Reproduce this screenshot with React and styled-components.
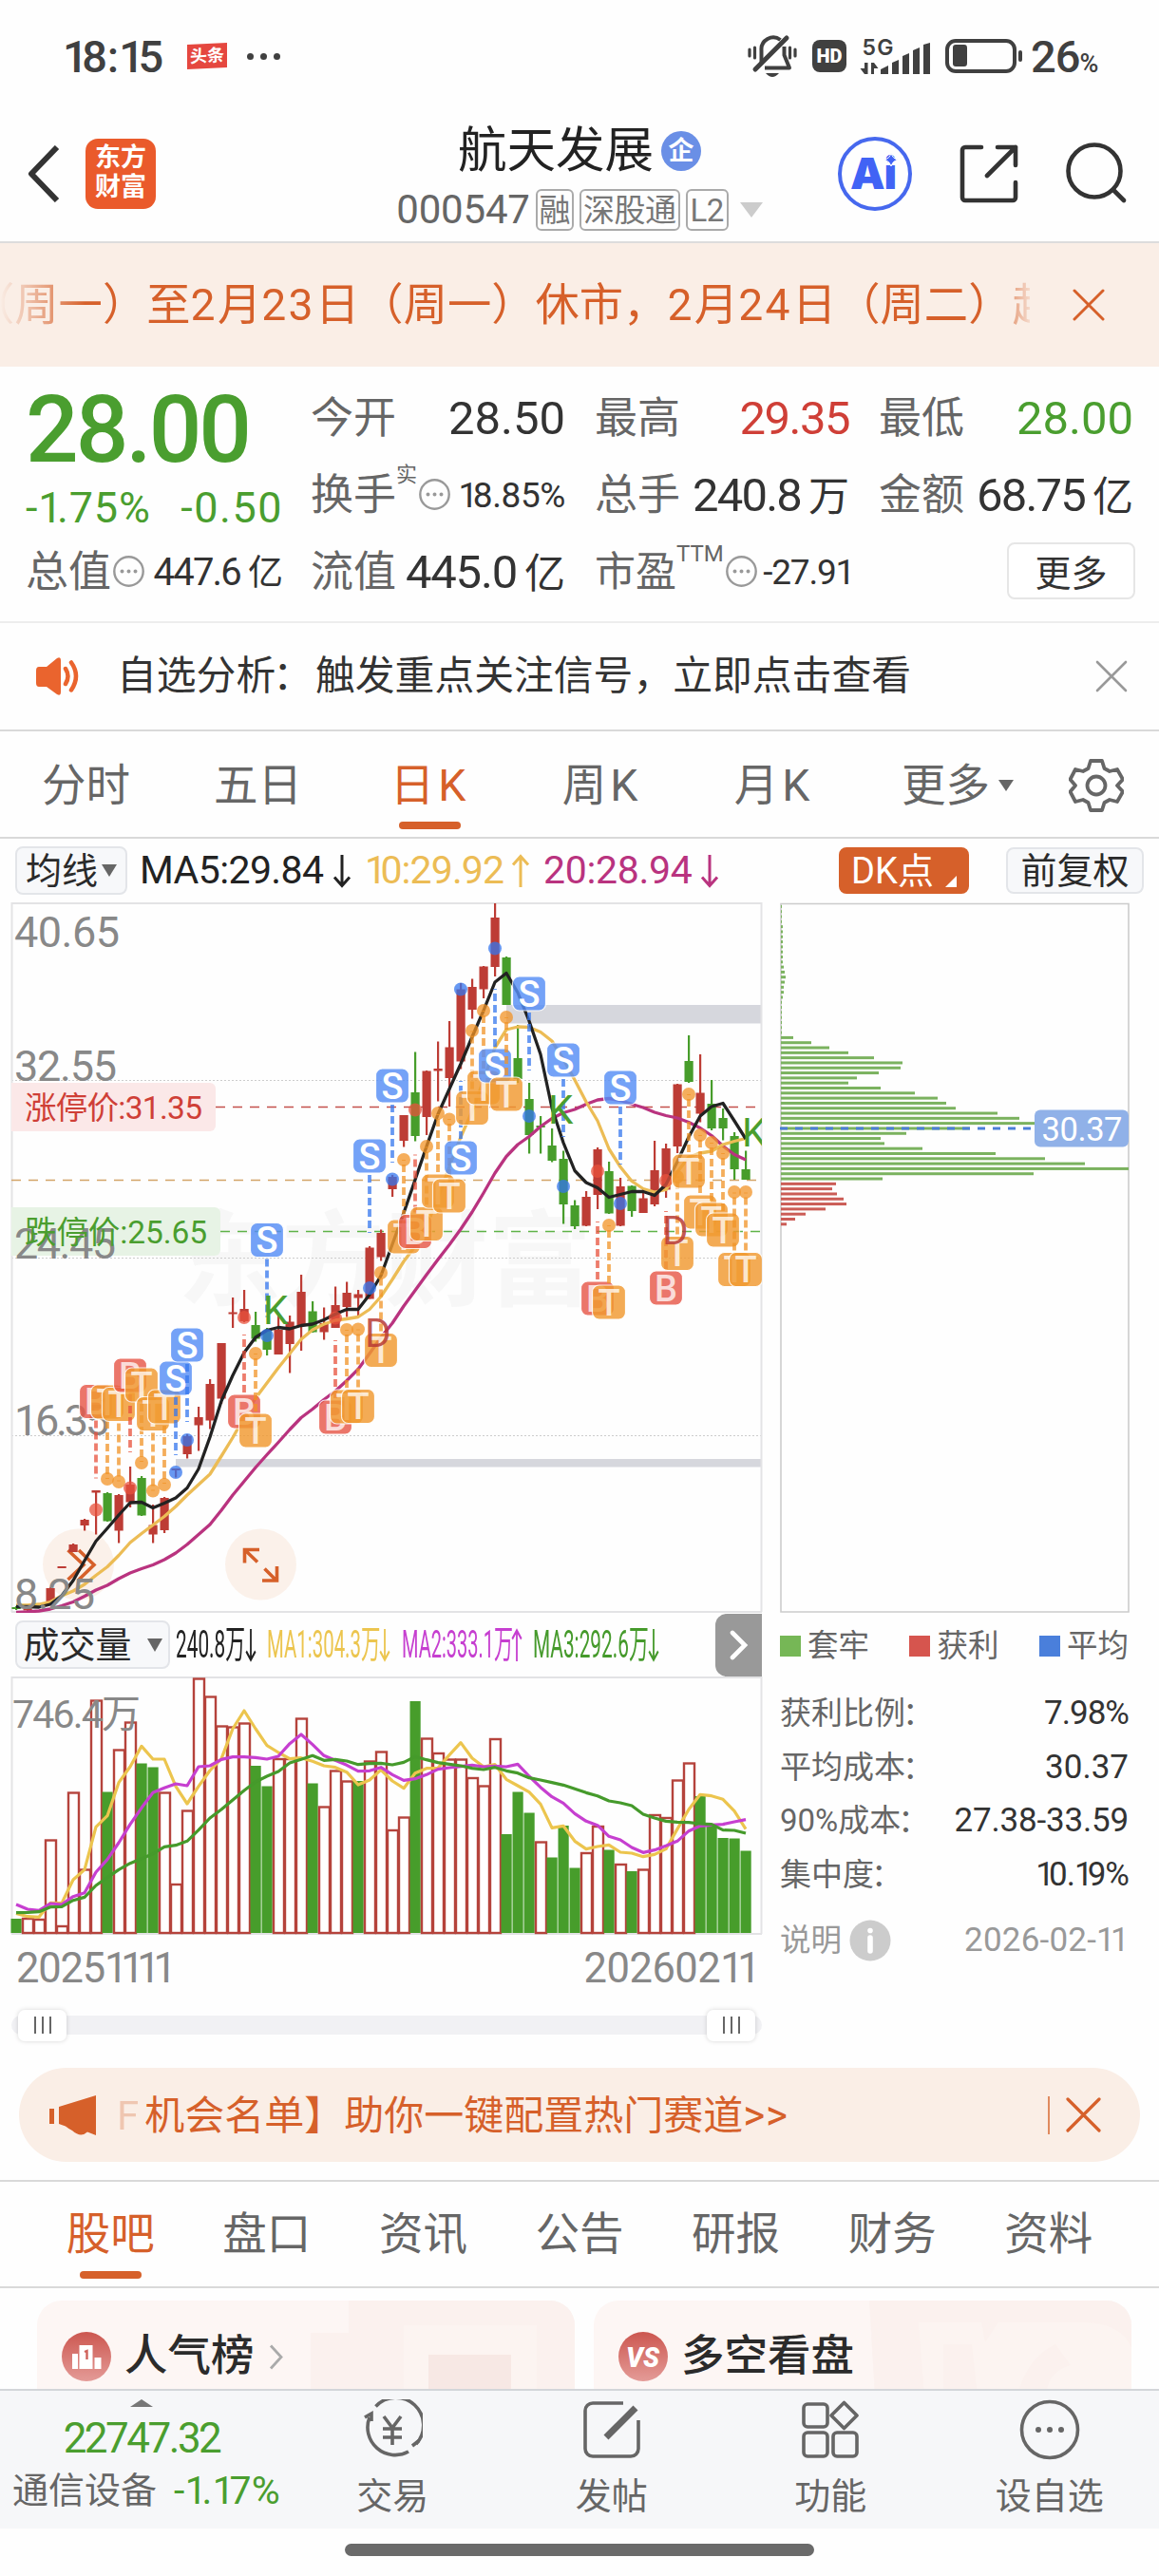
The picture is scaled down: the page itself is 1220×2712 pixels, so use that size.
import React from 'react';
import styled, { createGlobalStyle } from 'styled-components';

const GlobalStyle = createGlobalStyle`
  * {
    box-sizing: border-box;
  }
  body {
    margin: 0;
    background: #fefefe;
    color: #333;
    font-family: Roboto, "Noto Sans CJK SC", sans-serif;
    line-height: 1;
  }
  svg {
    display: block;
    flex: none;
  }
`;

const ORANGE = '#d6602a';
const GREEN = '#4a9e2f';
const RED = '#cf3f37';

const Page = styled.div`
  width: 1220px;
  height: 2712px;
  overflow: hidden;
  display: flex;
  flex-direction: column;
  white-space: nowrap;
`;

const Txt = styled.span`
  font-size: ${props => props.$size}px;
  letter-spacing: ${props => props.$ls || 0}px;
  color: ${props => props.$color || 'inherit'};
  font-weight: ${props => props.$weight || 400};
`;

// the digit 1 is set tighter than the other figures
const One = styled.span`
  margin-right: -0.14em;
`;

function Num({ children }) {
  return (
    <span>
      {children.split('').map((ch, i) => (ch === '1' ? <One key={i}>1</One> : ch))}
    </span>
  );
}

/* ---------- status bar ---------- */

const StatusBar = styled.div`
  height: 118px;
  padding: 0 60px 0 66px;
  display: flex;
  align-items: center;
  color: #404040;
`;

const NewsChip = styled.div`
  width: 42px;
  height: 26px;
  margin-left: 25px;
  background: #e5473f;
  color: #fff;
  font-size: 18px;
  font-weight: 700;
  display: flex;
  align-items: center;
  justify-content: center;
  transform: skewY(-3deg);
`;

const StatusDots = styled.div`
  display: flex;
  gap: 7px;
  margin: 0 auto 0 21px;

  i {
    width: 7px;
    height: 7px;
    border-radius: 50%;
    background: #404040;
  }
`;

const HdChip = styled.div`
  width: 36px;
  height: 34px;
  margin: 0 14px 0 15px;
  border-radius: 8px;
  background: #404040;
  color: #fff;
  font-size: 20px;
  font-weight: 900;
  display: flex;
  align-items: center;
  justify-content: center;
`;

const Percent = styled.div`
  width: 75px;
  margin-left: 7px;
  display: flex;
  align-items: baseline;
`;

const SignalBars = styled.svg`
  margin-right: 13px;
`;

function StatusIcons() {
  return (
    <>
      <svg width="54" height="48" viewBox="787 36 54 48" fill="none" stroke="#404040" strokeWidth="4">
        <path d="M802.500 67V54a12.500 12.500 0 0 1 20-11" />
        <path d="M796 74L829 41" strokeLinecap="round" strokeWidth="5" />
        <path d="M826.500 50v9l5.500 13.500H806" strokeLinejoin="round" />
        <path d="M807 78q7 8 14 0z" fill="#404040" stroke="none" />
        <path d="M790 53v7M795.500 51v11M832.500 51v11M838 53v7" strokeLinecap="round" strokeWidth="3.200" />
      </svg>
      <HdChip>HD</HdChip>
      <SignalBars width="76" height="42" viewBox="906 36 76 42" fill="#404040">
        <text x="908.500" y="56" fontSize="23" fontWeight="600" textLength="33" fontFamily="Inter">5G</text>
        <path d="M911 64h3.500v12H911l-4.500-6h4.500zM918 76V64h3l4.500 6H921v6z" />
        <path d="M928 76v-5l8-4v9zM940 76V64l7-3v15zM951 76V57l7-3v22zM962 76V51l7-3v28zM973 76V45l7-2v33z" />
      </SignalBars>
      <svg width="84" height="38" viewBox="995 40 84 38" fill="none" stroke="#404040" strokeWidth="4">
        <rect x="998" y="43" width="71" height="32" rx="9" />
        <rect x="1004" y="47" width="15" height="23" rx="3" fill="#404040" stroke="none" />
        <path d="M1075 55v8" strokeLinecap="round" />
      </svg>
    </>
  );
}

/* ---------- header ---------- */

const Header = styled.header`
  height: 138px;
  border-bottom: 2px solid #dcdcdc;
  display: grid;
  grid-template-columns: 1fr auto 1fr;
  align-items: center;
`;

const HeaderSide = styled.div`
  display: flex;
  align-items: center;
  gap: ${props => props.$gap}px;
  justify-content: ${props => (props.$end ? 'flex-end' : 'flex-start')};
  padding: 0 33px 7px 29px;
`;

const AppIcon = styled.div`
  width: 74px;
  height: 74px;
  border-radius: 13px;
  background: #ea5a2b;
  color: #fff;
  font-size: 27px;
  font-weight: 600;
  line-height: 31px;
  text-align: center;
  padding-top: 5px;
  white-space: normal;
`;

const TitleBlock = styled.div`
  padding-top: 8px;
  display: flex;
  flex-direction: column;
  align-items: center;
`;

const TitleRow = styled.div`
  height: 62px;
  display: flex;
  align-items: center;
  gap: ${props => props.$gap}px;
`;

const CorpBadge = styled.div`
  width: 42px;
  height: 42px;
  border-radius: 50%;
  background: #6a8fe6;
  color: #fff;
  font-size: 27px;
  font-weight: 700;
  display: flex;
  align-items: center;
  justify-content: center;
`;

const Tag = styled.span`
  height: 44px;
  width: ${props => props.$w}px;
  border: 2px solid #aaa;
  border-radius: 6px;
  color: #777;
  font-size: 33px;
  letter-spacing: -0.5px;
  display: flex;
  align-items: center;
  justify-content: center;
`;

const Caret = styled.i`
  width: 0;
  height: 0;
  border: ${props => props.$w / 2}px solid transparent;
  border-bottom-width: 0;
  border-top: ${props => props.$h}px solid ${props => props.$color || '#666'};
  margin-left: ${props => props.$ml || 0}px;
`;

/* ---------- banner ---------- */

const Banner = styled.div`
  height: 130px;
  background: #faeee6;
  color: ${ORANGE};
  display: flex;
  align-items: center;
  justify-content: space-between;
  padding-right: 57px;
`;

const Marquee = styled.div`
  width: 1084px;
  overflow: hidden;
  font-size: 46.300px;
  line-height: 60px;
  text-indent: -31px;
  mask-image: linear-gradient(90deg, transparent 0, #000 90px, #000 1045px, transparent 1090px);

  span {
    letter-spacing: 2.400px;
  }
`;

function Cross({ size, width, color }) {
  return (
    <svg width={size} height={size} viewBox={`0 0 ${size} ${size}`} stroke={color} strokeWidth={width} strokeLinecap="round">
      <path d={`M2 2L${size - 2} ${size - 2}M${size - 2} 2L2 ${size - 2}`} />
    </svg>
  );
}

/* ---------- quote ---------- */

const Quote = styled.section`
  height: 270px;
  padding: 14px 26px 0 27px;
  border-bottom: 2px solid #ededed;
  display: flex;
  gap: 29px;
`;

const PriceCol = styled.div`
  width: 271px;
  color: ${GREEN};
`;

const Price = styled.div`
  height: 106px;
  font-size: 98px;
  line-height: 106px;
  font-weight: 500;
  letter-spacing: -3px;
`;

const Change = styled.div`
  height: 56px;
  display: flex;
  align-items: center;
  justify-content: space-between;
`;

const Stats = styled.div`
  flex: 1;
  display: grid;
  grid-template-columns: repeat(3, 268px);
  grid-auto-rows: 81px;
  column-gap: 31px;
`;

const Cell = styled.div`
  height: 81px;
  display: flex;
  align-items: center;
  color: #333;
  font-size: ${props => props.$size || 49}px;
  letter-spacing: ${props => props.$ls || 0}px;

  b {
    font-weight: 400;
    margin-left: auto;
    color: ${props => props.$color || '#333'};
  }
  em {
    font-style: normal;
    font-size: ${props => props.$unit || 43}px;
    margin-left: 8px;
    letter-spacing: 0;
  }
`;

const Label = styled.span`
  font-size: ${props => props.$size || 45}px;
  letter-spacing: 0;
  color: #666;
`;

const Sup = styled.span`
  align-self: flex-start;
  margin-top: ${props => props.$top}px;
  font-size: ${props => props.$size}px;
  letter-spacing: 0;
  color: #666;
`;

function InfoDots() {
  return (
    <svg width="36" height="36" viewBox="0 0 36 36" fill="none" stroke="#999" strokeWidth="2.400">
      <circle cx="18.500" cy="16.500" r="15.200" />
      <path d="M11.500 16.500h.01M18.500 16.500h.01M25.500 16.500h.01" strokeWidth="4" strokeLinecap="round" />
    </svg>
  );
}

const MoreButton = styled.button`
  width: 135px;
  height: 60px;
  margin: 9px -2px auto auto;
  border: 2px solid #e6e6e6;
  border-radius: 8px;
  background: #fff;
  color: #333;
  font: 38px/1 "Noto Sans CJK SC", sans-serif;
  padding: 0;
`;

const Notice = styled.div`
  height: 114px;
  border-bottom: 2px solid #d9d9d9;
  padding: 0 33px 0 38px;
  display: flex;
  align-items: center;
  font-size: 41.800px;

  > span {
    margin: 0 auto 0 37px;
  }
`;

const Colon = styled.span`
  margin: 0 3px 0 -3px;
`;

/* ---------- period tabs ---------- */

const Tabs = styled.nav`
  height: ${props => props.$h}px;
  padding: 0 ${props => props.$px || 0}px;
  border-bottom: 2px solid #d9d9d9;
  border-top: ${props => (props.$line ? '2px solid #d9d9d9' : 'none')};
  display: flex;
  font-size: 46.500px;
  color: #666;
`;

const Tab = styled.div`
  position: relative;
  width: ${props => props.$w}px;
  padding-top: ${props => (props.$low ? 1 : 3)}px;
  letter-spacing: ${props => props.$ls || 0}px;
  display: flex;
  align-items: center;
  justify-content: center;
  color: ${props => (props.$active ? ORANGE : '#666')};

  &::after {
    content: '';
    display: ${props => (props.$active ? 'block' : 'none')};
    position: absolute;
    bottom: 8px;
    width: 65px;
    height: 8px;
    border-radius: 4px;
    background: ${ORANGE};
  }
`;

/* ---------- indicator row ---------- */

const IndicatorRow = styled.div`
  height: 67px;
  padding: 0 15px 0 16px;
  display: flex;
  align-items: center;
`;

const Chip = styled.div`
  width: ${props => props.$w}px;
  height: ${props => props.$h || 51}px;
  margin-left: ${props => props.$ml || 0}px;
  border: 2px solid ${props => (props.$fill ? 'transparent' : '#e3e5e9')};
  border-radius: 8px;
  background: ${props => props.$fill || '#f7f8fa'};
  background-clip: border-box;
  color: ${props => (props.$fill ? '#fff' : '#2a2a2a')};
  font-size: 38px;
  display: flex;
  align-items: center;
  justify-content: center;
`;

const Corner = styled.i`
  align-self: flex-end;
  margin: 0 0 5px 12px;
  border: 6.500px solid #fff;
  border-top-color: transparent;
  border-left-color: transparent;
`;

const Reading = styled.div`
  width: ${props => props.$w}px;
  margin-left: ${props => props.$ml}px;
  color: ${props => props.$color};
  font-size: 41px;
  letter-spacing: ${props => props.$ls}px;
  display: flex;
  align-items: center;
  justify-content: space-between;
`;

function Arrow({ color, up, w = 20 }) {
  return (
    <svg width={w} height="36" viewBox="0 0 20 36" preserveAspectRatio="none" fill="none" stroke={color} strokeWidth="3">
      <path d={up ? 'M10 35V3M2 11.500L10 2.500L18 11.500' : 'M10 1V33M2 24.500L10 33.500L18 24.500'} />
    </svg>
  );
}

/* ---------- charts ---------- */

const ChartArea = styled.section`
  display: flex;
  height: 1210px;
`;

const LeftCharts = styled.div`
  width: 810px;
`;

const STEP = 12;
const cx = i => 17 + i * STEP;

// up/down, body top, body bottom, high, low
const CANDLES = [
  [0, 1692, 1694, 1691, 1695], [1, 1693.5, 1695.5, 1693, 1697], [1, 1691, 1693, 1691, 1693],
  [1, 1672, 1690, 1671, 1690], [1, 1649, 1651, 1649, 1651], [1, 1626, 1634, 1625, 1634],
  [1, 1600, 1606, 1599, 1611.5], [1, 1569, 1571.5, 1569, 1615.5], [0, 1572, 1601.5, 1571, 1602],
  [1, 1574, 1611.5, 1573, 1624.5], [1, 1563, 1581.5, 1544, 1587], [0, 1556, 1595.5, 1554, 1596],
  [1, 1605.5, 1615.5, 1584, 1624.5], [1, 1577, 1611, 1576, 1614], [1, 1546, 1548, 1546, 1555.5],
  [1, 1512, 1531, 1510, 1535.5], [1, 1492, 1500.5, 1481, 1527.5], [1, 1457, 1495.5, 1452, 1504.5],
  [1, 1414, 1472.5, 1414, 1478], [1, 1381.5, 1383.5, 1366, 1398], [1, 1378, 1391, 1358, 1392],
  [0, 1395, 1409.5, 1381, 1412.5], [0, 1401, 1421, 1398, 1427], [1, 1400, 1426, 1385, 1426],
  [1, 1391.5, 1415, 1385, 1445.5], [1, 1360, 1396, 1342, 1422], [0, 1380.5, 1402.5, 1370, 1403],
  [1, 1393, 1402.5, 1376.5, 1410.5], [1, 1374, 1398, 1354.5, 1398], [1, 1361, 1376, 1349.5, 1386.5],
  [1, 1362.5, 1366.5, 1358, 1387], [1, 1313.5, 1367.5, 1312, 1367.5], [1, 1298, 1323.5, 1294.5, 1327.5],
  [1, 1239, 1252, 1237, 1260], [1, 1174, 1201, 1174, 1207.5], [0, 1150, 1196, 1107.5, 1201.5],
  [1, 1127.5, 1176, 1127, 1195], [1, 1125, 1127.5, 1096.5, 1159.5], [1, 1102.5, 1135, 1075, 1165],
  [1, 1041.5, 1117.5, 1035, 1125.5], [1, 1039, 1063, 1030.5, 1072.5], [1, 1017.5, 1041.5, 1017, 1051],
  [1, 966, 1018, 951, 1028], [0, 1008, 1058, 1007, 1058], [0, 1114, 1136, 1079, 1140],
  [0, 1157, 1195, 1140, 1214.5], [0, 1185, 1187, 1175, 1214.5], [0, 1206, 1222, 1188, 1223.5],
  [0, 1220, 1268, 1211.5, 1288.5], [0, 1269, 1291, 1263.5, 1294], [1, 1260, 1290.5, 1254, 1291],
  [1, 1210, 1258, 1208, 1273], [0, 1233, 1277.5, 1223, 1278], [1, 1249, 1290.5, 1240, 1291],
  [0, 1248.5, 1275, 1248, 1281], [1, 1261.5, 1277, 1251.5, 1277], [1, 1232, 1268, 1201, 1270],
  [1, 1209, 1252.5, 1204, 1261], [1, 1141.5, 1207, 1141, 1214], [0, 1117, 1139, 1090, 1140],
  [1, 1150.5, 1172.5, 1110, 1181.5], [0, 1162, 1188, 1137, 1190], [0, 1177, 1188, 1167, 1200.5],
  [0, 1196, 1231, 1192, 1242], [0, 1231, 1242, 1211.5, 1242],
];

const MA5 = [
  1691.5, 1691.5, 1692, 1689, 1680, 1664, 1643, 1622.5, 1609, 1595, 1582, 1581.5, 1587.5, 1582.5, 1577, 1566.5,
  1546.5, 1513, 1475, 1448, 1424, 1408, 1400.5, 1397.5, 1399, 1395.5, 1394, 1389.5, 1383.5, 1378.5, 1378.5, 1363,
  1343, 1310, 1277, 1242, 1207, 1173, 1146.5, 1120, 1091.5, 1064, 1034, 1024.5, 1045, 1075, 1110, 1166.5,
  1203, 1232.5, 1245, 1250.5, 1260.5, 1257.5, 1254.5, 1254.5, 1258.5, 1247, 1223, 1197, 1175, 1165, 1161.5, 1180, 1199,
];

const MA10 = [
  1690, 1690, 1689, 1686.5, 1680, 1675, 1668, 1658.5, 1649.5, 1637.5, 1624, 1614.5, 1605.5, 1596.5, 1586, 1574,
  1563, 1552, 1533, 1513.5, 1492, 1472, 1456, 1440, 1425, 1410, 1400, 1394, 1390, 1388.5, 1386.5, 1378.5,
  1365, 1347, 1328, 1312, 1290, 1262, 1228, 1197, 1170, 1137, 1103, 1084, 1081, 1081.5, 1086.5, 1096,
  1115, 1137, 1160, 1180, 1209.5, 1228.5, 1243.5, 1251.5, 1255, 1252.5, 1234, 1218, 1214, 1212, 1205, 1201.5, 1198.5,
];

const MA20 = [
  1697.5, 1697, 1696, 1694, 1690.5, 1686.5, 1680.5, 1674, 1669, 1662, 1656, 1651.5, 1647.5, 1642, 1635, 1626,
  1615.5, 1605, 1590, 1574, 1559.5, 1545, 1531.5, 1518.5, 1505, 1492.5, 1483.5, 1473.5, 1464.5, 1453.5, 1441.5, 1425,
  1408, 1393, 1375, 1358.5, 1342, 1326, 1310.5, 1294, 1276, 1256, 1235, 1217.5, 1205, 1196.5, 1186, 1177.5,
  1171.5, 1168, 1162.5, 1158, 1156.5, 1158.5, 1162.5, 1166, 1171, 1174.5, 1177, 1181.5, 1187.5, 1195.5, 1206.5, 1215.5, 1221,
];

// type, index, dot y, badge y
const SIGNALS = [
  ['B', 7, 1589.5, 1475.5], ['T', 8, 1557, 1476], ['T', 9, 1560, 1478.5], ['B', 10, 1566.5, 1448],
  ['T', 11, 1540, 1458], ['T', 12, 1569.5, 1488.5], ['T', 13, 1563, 1481], ['S', 14, 1550, 1451],
  ['S', 15, 1516, 1416], ['B', 20, 1387, 1486], ['T', 21, 1425, 1506], ['S', 22, 1406, 1305.5],
  ['B', 28, 1387.5, 1492], ['T', 29, 1400, 1481], ['T', 30, 1399.5, 1480.5], ['S', 31, 1356, 1217],
  ['T', 32, 1340, 1421.5], ['S', 33, 1241.5, 1143], ['T', 34, 1221, 1302], ['B', 35, 1168.5, 1296.5],
  ['T', 36, 1207, 1288.5], ['T', 37, 1172, 1254], ['T', 38, 1178.5, 1259], ['S', 39, 1041.5, 1219],
  ['T', 40, 1085, 1166.5], ['T', 41, 1064, 1145], ['S', 42, 998.5, 1122], ['T', 43, 1071, 1152],
  ['S', 45, 1175, 1046], ['S', 48, 1249, 1116], ['B', 51, 1233, 1367], ['T', 52, 1290, 1371],
  ['S', 53, 1267, 1145], ['B', 57, 1243, 1356], ['T', 58, 1239, 1319.5], ['T', 59, 1152, 1233],
  ['T', 60, 1195, 1276], ['T', 61, 1203, 1284], ['T', 62, 1214, 1295], ['T', 63, 1255, 1336.5],
  ['T', 64, 1255, 1336.5],
];

const SIGNAL_FILL = { S: '#568ef6', T: '#f19a30', B: '#e8594a' };
const DOT_FILL = { S: '#3476ee', T: '#f19325', B: '#e8513c' };

const points = ys => ys.map((y, i) => `${cx(i)},${y}`).join(' ');

function Signal({ type, index, dot, badge }) {
  const x = cx(index);
  const dir = dot > badge ? 1 : -1;
  const from = badge + dir * 20;
  return (
    <g>
      <circle cx={x} cy={dot} r="7" fill={DOT_FILL[type]} opacity=".75" />
      <path d={`M${x} ${from}V${from + dir * 61}`} stroke={DOT_FILL[type]} strokeWidth="3.800" strokeDasharray="8 4" opacity=".75" />
      <rect x={x - 17.5} y={badge - 18} width="35" height="36" rx="7" fill={SIGNAL_FILL[type]} stroke="#fff" strokeWidth="1.200" opacity=".82" />
      <text x={x} y={badge + 13.5} fontSize="38" fontWeight="500" textAnchor="middle" fill="#fff" fillOpacity={type === 'S' ? 1 : 0.75}>{type}</text>
    </g>
  );
}

function PriceChart() {
  return (
    <svg width="810" height="748" viewBox="0 950 810 748">
      <defs>
        <clipPath id="plot"><rect x="12" y="950" width="790" height="748" /></clipPath>
      </defs>
      <text x="187" y="1366" fontSize="109" fontWeight="700" fill="#f7f7f7">东方财富</text>
      <path d="M12 1137.500H801M12 1324.500H801M12 1511.500H801" stroke="#ccc" strokeDasharray="2 2" />
      <rect x="533" y="1058" width="268" height="19.500" fill="#d6d7dd" />
      <rect x="185" y="1536" width="616" height="8.500" fill="#d6d7dd" />
      <path d="M12.500 1697V951H801.500V1697" fill="none" stroke="#e3e3e5" strokeWidth="2" />
      <path d="M12 1697H802" stroke="#e3e3e5" strokeWidth="2" />

      <path d="M227 1165.500H801" stroke="#c4514c" strokeDasharray="10 8" strokeWidth="1.400" />
      <path d="M12 1242.500H801" stroke="#d3a468" strokeDasharray="10 8" strokeWidth="1.400" />
      <path d="M232 1296.500H801" stroke="#5fb348" strokeDasharray="10 8" strokeWidth="1.400" />
      <path d="M12 1140H221a6 6 0 0 1 6 6V1185a6 6 0 0 1-6 6H12z" fill="#fbe8e8" />
      <path d="M12 1271H226a6 6 0 0 1 6 6V1316a6 6 0 0 1-6 6H12z" fill="#e7f3e5" />

      <g fill="#faeee6" fillOpacity=".85">
        <circle cx="82.500" cy="1647" r="37.500" />
        <circle cx="274.500" cy="1647" r="37.500" />
      </g>
      <g fill="none" stroke={ORANGE} strokeWidth="3.600">
        <path d="M71.500 1632L88 1647.500L71.500 1663M83 1632L99 1647.500L83 1663" />
        <path d="M273 1631.500H257.500V1645.500M258 1632L271 1644.500M276 1664H291.500V1649M291 1664L278.500 1651.500" />
      </g>

      {CANDLES.map(([up, top, bottom, high, low], i) => (
        <g key={i} fill={up ? '#bd3c35' : '#479d2b'}>
          <rect x={cx(i) - 1} y={high} width="2.200" height={low - high} />
          <rect x={cx(i) - 4.5} y={top} width="9.200" height={bottom - top} />
        </g>
      ))}
      <g fill="none" strokeWidth="3.300" strokeLinejoin="round">
        <polyline points={points(MA20)} stroke="#b9337f" />
        <polyline points={points(MA10)} stroke="#ecbc55" />
        <polyline points={points(MA5)} stroke="#222" />
      </g>

      <g fontSize="45" fill="#888">
        <text x="15" y="997" textLength="111">40.65</text>
        <text x="15" y="1138" textLength="108">32.55</text>
        <text x="15" y="1325" textLength="107">24.45</text>
        <text x="15" y="1511" textLength="100">16.35</text>
        <text x="15" y="1694" textLength="85">8.25</text>
      </g>
      <text x="26" y="1178" fontSize="33.500" textLength="187" fill={RED}>涨停价:31.35</text>
      <text x="26" y="1309" fontSize="33.500" textLength="192" fill={GREEN}>跌停价:25.65</text>

      <g clipPath="url(#plot)">
        {SIGNALS.map(([type, index, dot, badge]) => (
          <Signal key={index} type={type} index={index} dot={dot} badge={badge} />
        ))}
        <g fontSize="42" fill="#4a9e2f">
          <text x="277" y="1394">K</text>
          <text x="577" y="1183">K</text>
          <text x="781" y="1207">K</text>
        </g>
        <g fontSize="42" fill="#b83a34" fillOpacity=".85">
          <text x="384" y="1418">D</text>
          <text x="697" y="1310">D</text>
        </g>
      </g>
    </svg>
  );
}

const VolumeHead = styled.div`
  height: 67px;
  padding: 0 8px 0 16px;
  display: flex;
  align-items: center;
`;

const Squeezed = styled.div`
  width: ${props => props.$w}px;
  margin-left: ${props => props.$ml}px;
  color: ${props => props.$color};
  font-size: 40px;
  display: flex;
  align-items: center;
  justify-content: space-between;

  span {
    width: 0;
    transform: scaleX(${props => props.$scale});
    transform-origin: left;
  }
`;

const Expand = styled.div`
  width: 49px;
  height: 66px;
  margin-left: auto;
  border-radius: 12px 0 0 12px;
  background: #999;
  display: flex;
  align-items: center;
  justify-content: center;
`;

// bar tops
const VOLUME = [
  2020, 2019, 2020, 1936.5, 2027, 1886.5, 1967.5, 1789.5, 1886.5, 1841.5, 1812.5, 1856.5, 1860.5, 1886.5, 1983, 1905.5,
  1766.5, 1785.5, 1816.5, 1817.5, 1813.5, 1859, 1880.5, 1851, 1851, 1808.5, 1877.5, 1901.5, 1863.5, 1874.5, 1875, 1853.5,
  1843.5, 1926, 1912.5, 1791, 1829.5, 1845, 1851.5, 1851.5, 1871, 1879.5, 1830, 1931, 1886.5, 1908.5, 1938.5, 1955.5,
  1922, 1966.5, 1950, 1922, 1947.5, 1962, 1970, 1967.5, 1910, 1913, 1873.5, 1855.5, 1891, 1920, 1935, 1935.5, 1948.5,
];

const DOWN_DAYS = [0, 8, 11, 12, 21, 22, 26, 30, 35, 43, 44, 45, 47, 48, 49, 52, 54, 60, 61, 62, 63, 64];

const VOL_MA1 = [
  973, 983, 985, 940, 941, 867, 835, 700, 665, 560, 510, 445, 486, 486, 572, 627, 572, 522, 485, 390, 333, 390,
  443, 465, 485, 482, 493, 507, 512, 527, 567, 552, 520, 555, 578, 530, 515, 514, 473, 434, 483, 510, 503, 550,
  570, 590, 628, 703, 697, 745, 770, 762, 757, 780, 783, 794, 787, 770, 707, 645, 598, 602, 613, 650, 707,
];

const VOL_MA2 = [
  945, 960, 964, 942, 945, 920, 908, 843, 803, 750, 692, 640, 592, 577, 564, 570, 510, 507, 487, 479, 479, 481,
  486, 477, 437, 408, 440, 475, 490, 505, 524, 523, 512, 535, 553, 548, 535, 518, 513, 509, 505, 510, 508, 510,
  502, 540, 575, 605, 625, 658, 682, 695, 730, 741, 765, 781, 773, 760, 745, 713, 697, 694, 692, 684, 677,
];

const VOL_MA3 = [
  971, 970, 968, 953, 952, 932, 922, 885, 860, 835, 815, 800, 785, 763, 758, 745, 710, 672, 645, 615, 585, 558,
  540, 525, 498, 487, 475, 490, 487, 492, 503, 500, 499, 504, 496, 478, 488, 497, 502, 507, 515, 519, 512, 523,
  530, 545, 552, 560, 568, 580, 592, 602, 618, 624, 633, 660, 672, 682, 685, 686, 690, 692, 710, 711, 720,
];

const volPoints = list => points(list.map(v => 1690 + v / 3));

function VolumeChart() {
  return (
    <svg width="810" height="275" viewBox="0 1765 810 275">
      <path d="M12.500 2036V1766H801.500V2036M12 2036H802" fill="none" stroke="#e3e3e5" strokeWidth="2" />
      {VOLUME.map((top, i) => (
        DOWN_DAYS.includes(i)
          ? <rect key={i} x={cx(i) - 5.5} y={top} width="11.200" height={2035 - top} fill="#479d2b" />
          : <rect key={i} x={cx(i) - 5} y={top + 1} width="11" height={2034 - top} fill="#fff" stroke="#b5433c" strokeWidth="2.400" />
      ))}
      <g fill="none" strokeWidth="3.200" strokeLinejoin="round">
        <polyline points={volPoints(VOL_MA1)} stroke="#ecc54e" />
        <polyline points={volPoints(VOL_MA2)} stroke="#c63fd0" />
        <polyline points={volPoints(VOL_MA3)} stroke="#459a2b" />
      </g>
      <text x="13" y="1819" fontSize="41" textLength="135" fill="#888">746.4万</text>
    </svg>
  );
}

const Dates = styled.div`
  height: 66px;
  padding: 0 16px 0 17px;
  display: flex;
  align-items: center;
  justify-content: space-between;
  color: #888;
`;

const Slider = styled.div`
  width: 790px;
  height: 20px;
  margin: 16px 0 0 12px;
  padding: 0 7px;
  border-radius: 10px;
  background: #f1f1f4;
  display: flex;
  align-items: center;
  justify-content: space-between;
`;

const Handle = styled.div`
  width: 51px;
  height: 33px;
  border-radius: 7px;
  background: #fff;
  box-shadow: 0 0 5px rgba(0, 0, 0, 0.16);
  display: flex;
  align-items: center;
  justify-content: center;
  gap: 6px;

  i {
    width: 2px;
    height: 18px;
    background: #666;
  }
`;

/* ---------- chips panel ---------- */

const ChipPanel = styled.aside`
  width: 410px;
  padding: 0 32px 0 11px;
`;

const TINY = [1, 1, 1, 1, 2, 2, 2, 2, 2, 2, 2, 2, 3, 4, 5, 4, 3, 3, 2, 1, 1, 1, 1, 1, 1, 1];

const TRAPPED = [
  13, 32, 51, 71, 98, 128, 126, 103, 80, 71, 105, 141, 165, 174, 184, 228, 251, 269, 199, 132, 105, 109, 149, 226,
  278, 320, 366, 266, 107,
];

const PROFIT = [58, 54, 59, 66, 69, 47, 26, 15, 6];

function ChipChart() {
  const rows = [...TINY, ...TRAPPED, ...PROFIT];
  const split = TINY.length + TRAPPED.length;
  return (
    <svg width="368" height="748" viewBox="821 950 368 748">
      <path d="M822 951.500H1188V1697H822z" fill="none" stroke="#ccc" strokeWidth="1.600" />
      {rows.map((w, i) => (
        <rect key={i} x="822" y={952.9 + i * 5.308} width={w} height="3" fill={i < split ? '#7bb25f' : '#cb5c56'} />
      ))}
      <path d="M821 1188H1086" stroke="#4c7fd8" strokeWidth="3" strokeDasharray="8 8" />
      <rect x="1089" y="1168.500" width="99" height="39" rx="6" fill="#90b1e8" />
      <text x="1096.500" y="1200.500" fontSize="34.500" textLength="85" fill="#fff">30.37</text>
    </svg>
  );
}

const Legend = styled.div`
  height: 70px;
  margin-bottom: 7px;
  display: flex;
  align-items: center;
  justify-content: space-between;
  color: #666;
  font-size: 32.500px;

  span {
    display: flex;
    align-items: center;
    gap: 7px;
  }
`;

const Swatch = styled.i`
  width: 22px;
  height: 22px;
  background: ${props => props.$color};
`;

const ChipRow = styled.div`
  height: 56.700px;
  display: flex;
  align-items: center;
  justify-content: space-between;
  color: #666;
  font-size: 33px;

  b {
    font-weight: 400;
    font-size: 35px;
    letter-spacing: ${props => props.$ls || 0}px;
    color: #333;
  }
`;

const ChipFoot = styled.div`
  height: 56px;
  margin-top: 13px;
  display: flex;
  align-items: center;
  color: #999;
  font-size: 32.500px;

  b {
    margin: 0 4px 0 auto;
    font-weight: 400;
    font-size: 35px;
    letter-spacing: 0.2px;
  }
`;

/* ---------- promo ---------- */

const Promo = styled.div`
  height: 99px;
  margin: 17px 20px 19px;
  padding: 0 41px 0 32px;
  border-radius: 50px;
  background: #faeee6;
  color: ${ORANGE};
  font-size: 42px;
  display: flex;
  align-items: center;

  > span {
    margin-left: 21px;
  }
`;

const Faded = styled.i`
  font-style: normal;
  opacity: 0.28;
  margin-right: 6px;
`;

const Divider = styled.i`
  width: 2px;
  height: 40px;
  margin: 0 17px 0 auto;
  background: #e08a5f;
`;

/* ---------- cards ---------- */

const Cards = styled.div`
  height: 106px;
  padding: 13px 29px 0 39px;
  display: flex;
  gap: 20px;
  overflow: hidden;
`;

const Card = styled.div`
  position: relative;
  flex: 1;
  height: 160px;
  border-radius: 26px;
  background: #fdf6f4;
  overflow: hidden;

  > svg {
    position: absolute;
    right: 0;
    top: 0;
  }
`;

const CardHead = styled.div`
  position: relative;
  height: 118px;
  padding-left: 26px;
  display: flex;
  align-items: center;
  color: #2b2b2b;
  font-size: 45.500px;
  font-weight: 500;

  span {
    margin: 0 15px 0 14px;
  }
`;

/* ---------- bottom bar ---------- */

const BottomBar = styled.footer`
  height: 147px;
  border-top: 2px solid #d3d6d9;
  background: #f6f7f9;
  display: flex;
`;

const IndexBox = styled.div`
  width: 298px;
  padding: 9px 0 0 13px;
  font-size: 38px;
  color: #666;

  > i {
    display: block;
    width: 0;
    margin-left: 124px;
    border: 12px solid transparent;
    border-top-width: 0;
    border-bottom: 8px solid #777;
  }
`;

const IndexValue = styled.div`
  width: 272px;
  height: 66px;
  line-height: 66px;
  text-align: center;
  color: ${GREEN};
  font-size: 44px;
  letter-spacing: -2.500px;
`;

const IndexLine = styled.div`
  height: 44px;
  display: flex;
  align-items: center;
  gap: 18px;
`;

const Action = styled.div`
  width: 230.500px;
  padding-top: 9px;
  display: flex;
  flex-direction: column;
  align-items: center;
  color: #666;
  font-size: 38px;

  span {
    margin-top: 19px;
  }
`;

const HomeZone = styled.div`
  flex: 1;
  padding-top: 16px;

  i {
    display: block;
    width: 494px;
    height: 13px;
    margin: 0 auto;
    border-radius: 7px;
    background: #6a6a6a;
  }
`;

const ACTIONS = [
  ['交易', (
    <>
      <path d="M14.500 7.500A29 29 0 0 1 57 47M49 55A29 29 0 0 1 8 19" />
      <path d="M3 19L10 15V23M53 49L60 43.500" />
      <path d="M23 18L32 30L41 18M32 30V48M22 31H42M22 40H42" />
    </>
  )],
  ['发帖', (
    <>
      <path d="M44 4H12a8 8 0 0 0-8 8V52a8 8 0 0 0 8 8H52a8 8 0 0 0 8-8V22" />
      <path d="M26 40L57 9" strokeWidth="7" />
    </>
  )],
  ['功能', (
    <>
      <rect x="4" y="5" width="25" height="24" rx="4" />
      <path d="M46.500 3.500L60 17L46.500 30.500L33 17z" strokeLinejoin="round" />
      <rect x="4" y="35" width="25" height="25" rx="4" />
      <rect x="35" y="35" width="25" height="25" rx="4" />
    </>
  )],
  ['设自选', (
    <>
      <circle cx="32" cy="32" r="29.500" />
      <path d="M20 32h.01M32 32h.01M44 32h.01" strokeWidth="6" strokeLinecap="round" />
    </>
  )],
];

const STATS = [
  { label: '今开', value: '28.50' },
  { label: '最高', value: '29.35', color: RED, ls: -1.5 },
  { label: '最低', value: '28.00', color: GREEN },
  { label: '换手', value: '18.85%', sup: '实', supSize: 22, top: 8, info: true, size: 37, ls: -0.4 },
  { label: '总手', value: '240.8', unit: '万', ls: -1.8 },
  { label: '金额', value: '68.75', unit: '亿', ls: -1.8 },
  { label: '流值', value: '445.0', unit: '亿', ls: -1.2 },
  { label: '市盈', value: '-27.91', sup: 'TTM', supSize: 24, top: 9, info: true, size: 37, ls: -1.2, small: true },
];

const CHIP_ROWS = [
  ['获利比例', '7.98%', -1],
  ['平均成本', '30.37', 0],
  ['90%成本', '27.38-33.59', -0.2],
  ['集中度', '10.19%', -1],
];

function App() {
  return (
    <Page>
      <GlobalStyle />
      <StatusBar>
        <Txt $size={47} $ls={0} $weight={500}><Num>18:15</Num></Txt>
        <NewsChip>头条</NewsChip>
        <StatusDots><i /><i /><i /></StatusDots>
        <StatusIcons />
        <Percent>
          <Txt $size={47} $ls={-1} $weight={500}>26</Txt>
          <Txt $size={27} $weight={500}>%</Txt>
        </Percent>
      </StatusBar>

      <Header>
        <HeaderSide $gap={27}>
          <svg width="34" height="60" viewBox="0 0 34 60" fill="none" stroke="#333" strokeWidth="6">
            <path d="M31 2L4 30L31 58" strokeLinejoin="round" />
          </svg>
          <AppIcon>东方<br />财富</AppIcon>
        </HeaderSide>
        <TitleBlock>
          <TitleRow $gap={8}>
            <Txt $size={51.5} $color="#222">航天发展</Txt>
            <CorpBadge>企</CorpBadge>
          </TitleRow>
          <TitleRow $gap={6}>
            <Txt $size={42} $ls={-0.2} $color="#666">000547</Txt>
            <Tag $w={40}>融</Tag>
            <Tag $w={106}>深股通</Tag>
            <Tag $w={45}>L2</Tag>
            <Caret $w={24} $h={16} $color="#ccc" $ml={6} />
          </TitleRow>
        </TitleBlock>
        <HeaderSide $end $gap={48}>
          <svg width="80" height="80" viewBox="0 0 80 80">
            <circle cx="40" cy="40" r="37" fill="none" stroke="#4668ee" strokeWidth="4" />
            <text x="14" y="56" fontSize="46" fontWeight="900" fontFamily="Inter" fill="#4163f5" textLength="49">Ai</text>
            <path d="M57 18q1.500 6 7 7q-5.500 1.500-7 7q-1.500-5.500-7-7q5.500-1 7-7z" fill="#4163f5" stroke="#fff" strokeWidth="1" />
          </svg>
          <svg width="64" height="64" viewBox="0 0 64 64" fill="none" stroke="#333" strokeWidth="4.600" strokeLinecap="round" strokeLinejoin="round">
            <path d="M24 4H7a3 3 0 0 0-3 3V57a3 3 0 0 0 3 3H57a3 3 0 0 0 3-3V41M41 4H60V23M60 4L30 34" />
          </svg>
          <svg width="66" height="66" viewBox="0 0 66 66" fill="none" stroke="#333" strokeWidth="4.600" strokeLinecap="round">
            <circle cx="31" cy="30" r="27.500" />
            <path d="M51 50L62 61" />
          </svg>
        </HeaderSide>
      </Header>

      <Banner>
        <Marquee>（周一）至<span>2</span>月<span>23</span>日（周一）休市，<span>2</span>月<span>24</span>日（周二）起</Marquee>
        <Cross size={34} width={3} color={ORANGE} />
      </Banner>

      <Quote>
        <PriceCol>
          <Price>28.00</Price>
          <Change>
            <Txt $size={45} $ls={0.8}><Num>-1.75%</Num></Txt>
            <Txt $size={45} $ls={1.5}>-0.50</Txt>
          </Change>
          <Cell $size={40} $unit={37} $ls={-1.8}>
            <Label>总值</Label>
            <InfoDots />
            <b>447.6<em>亿</em></b>
          </Cell>
        </PriceCol>
        <Stats>
          {STATS.map(item => (
            <Cell key={item.label} $size={item.size} $ls={item.ls} $color={item.color}>
              <Label $size={item.small ? 43 : 45}>{item.label}</Label>
              {item.sup && <Sup $top={item.top} $size={item.supSize}>{item.sup}</Sup>}
              {item.info && <InfoDots />}
              <b><Num>{item.value}</Num>{item.unit && <em>{item.unit}</em>}</b>
            </Cell>
          ))}
          <MoreButton>更多</MoreButton>
        </Stats>
      </Quote>

      <Notice>
        <svg width="48" height="42" viewBox="0 0 48 42" fill="#ea642e">
          <path d="M3 11H11L22 2q4-2 4 2V38q0 4-4 2L11 32H3q-3 0-3-4V15q0-4 3-4z" />
          <path d="M31 13q5 8 0 16M37 6.500q10 14 0 29" fill="none" stroke="#ea642e" strokeWidth="4.500" strokeLinecap="round" />
        </svg>
        <span>自选分析<Colon>：</Colon>触发重点关注信号，立即点击查看</span>
        <Cross size={34} width={2.6} color="#999" />
      </Notice>

      <Tabs $h={113}>
        <Tab $w={181}>分时</Tab>
        <Tab $w={181}>五日</Tab>
        <Tab $w={181} $ls={4} $active>日K</Tab>
        <Tab $w={181} $ls={4}>周K</Tab>
        <Tab $w={181} $ls={4}>月K</Tab>
        <Tab $w={206}>更多<Caret $w={16} $h={12} $ml={9} /></Tab>
        <Tab $w={85}>
          <svg width="58" height="58" viewBox="0 0 58 58" fill="none" stroke="#666" strokeWidth="3.800" strokeLinejoin="round">
            <path d="M23 3H35L37.500 11L43 14L51 12L57 22.500L51 29L57 35.500L51 46L43 44L37.500 47L35 55H23L20.500 47L15 44L7 46L1.500 35.500L7 29L1.500 22.500L7 12L15 14L20.500 11z" />
            <circle cx="29" cy="29" r="9.500" />
          </svg>
        </Tab>
      </Tabs>

      <IndicatorRow>
        <Chip $w={118}>均线<Caret $w={16} $h={13} $ml={4} /></Chip>
        <Reading $w={223} $ml={13} $ls={-0.6} $color="#222">MA5:29.84<Arrow color="#222" /></Reading>
        <Reading $w={174} $ml={14} $ls={-0.9} $color="#ecbc55"><Num>10:29.92</Num><Arrow up color="#ecbc55" /></Reading>
        <Reading $w={185} $ml={14} $ls={-0.3} $color="#b9337f">20:28.94<Arrow color="#b9337f" /></Reading>
        <Chip $w={137} $h={49} $ml={126} $fill={ORANGE}>DK点<Corner /></Chip>
        <Chip $w={145} $h={49} $ml={39}>前复权</Chip>
      </IndicatorRow>

      <ChartArea>
        <LeftCharts>
          <PriceChart />
          <VolumeHead>
            <Chip $w={163}>成交量<Caret $w={16} $h={14} $ml={16} /></Chip>
            <Squeezed $w={85} $ml={6} $scale={0.52} $color="#222"><span>240.8万</span><Arrow w={12} color="#222" /></Squeezed>
            <Squeezed $w={130} $ml={11} $scale={0.51} $color="#ecc54e"><span>MA1:304.3万</span><Arrow w={12} color="#ecc54e" /></Squeezed>
            <Squeezed $w={127} $ml={12} $scale={0.5} $color="#c63fd0"><span>MA2:333.1万</span><Arrow up w={12} color="#c63fd0" /></Squeezed>
            <Squeezed $w={133} $ml={11} $scale={0.52} $color="#459a2b"><span>MA3:292.6万</span><Arrow w={12} color="#459a2b" /></Squeezed>
            <Expand>
              <svg width="20" height="32" viewBox="0 0 20 32" fill="none" stroke="#fff" strokeWidth="4.600" strokeLinecap="round">
                <path d="M3 3L16 16L3 29" />
              </svg>
            </Expand>
          </VolumeHead>
          <VolumeChart />
          <Dates>
            <Txt $size={43.5} $ls={-1.2}><Num>20251111</Num></Txt>
            <Txt $size={43.5} $ls={-0.5}><Num>20260211</Num></Txt>
          </Dates>
          <Slider>
            <Handle><i /><i /><i /></Handle>
            <Handle><i /><i /><i /></Handle>
          </Slider>
        </LeftCharts>

        <ChipPanel>
          <ChipChart />
          <Legend>
            <span><Swatch $color="#76b756" />套牢</span>
            <span><Swatch $color="#d6554e" />获利</span>
            <span><Swatch $color="#4a7fdb" />平均</span>
          </Legend>
          {CHIP_ROWS.map(([label, value, ls]) => (
            <ChipRow key={label} $ls={ls}>
              <span>{label}<Colon>：</Colon></span>
              <b><Num>{value}</Num></b>
            </ChipRow>
          ))}
          <ChipFoot>
            说明
            <svg width="52" height="44" viewBox="0 0 52 44">
              <circle cx="30" cy="22" r="21.500" fill="#ccc" />
              <path d="M30 19V33M30 11.500v.01" stroke="#fff" strokeWidth="5.600" strokeLinecap="round" />
            </svg>
            <b><Num>2026-02-11</Num></b>
          </ChipFoot>
        </ChipPanel>
      </ChartArea>

      <Promo>
        <svg width="50" height="42" viewBox="0 0 50 42" fill={ORANGE}>
          <path d="M0 14h5v16H0zM10 12L49 0V42L40 38.500Q33 45 24 37Q20 35 17 32.500L10 30z" />
        </svg>
        <span><Faded>F</Faded>机会名单】助你一键配置热门赛道<Txt $size={44} $ls={0.8}>&gt;&gt;</Txt></span>
        <Divider />
        <Cross size={37} width={3.2} color={ORANGE} />
      </Promo>

      <Tabs $h={114} $px={34} $line>
        {['股吧', '盘口', '资讯', '公告', '研报', '财务', '资料'].map((name, i) => (
          <Tab key={name} $w={164.6} $low $active={i === 0}>{name}</Tab>
        ))}
      </Tabs>

      <Cards>
        <Card>
          <svg width="300" height="100" viewBox="0 0 300 100">
            <path d="M62 0H300V100H22V34H62z" fill="#faefec" opacity=".75" />
            <path d="M120 26H260V100H120z" fill="#fcf4f1" />
            <path d="M146 57H233V100H146z" fill="#f7e8e4" />
          </svg>
          <CardHead>
            <svg width="52" height="52" viewBox="0 0 52 52">
              <defs>
                <linearGradient id="badge" x2="0" y2="1"><stop stopColor="#cc5750" /><stop offset="1" stopColor="#e49b97" /></linearGradient>
              </defs>
              <circle cx="26" cy="26" r="26" fill="url(#badge)" />
              <path d="M11 23h6v16h-6zM18.500 14h14v25h-14zM34.500 27h7v12h-7z" fill="#fff" />
              <path d="M24 21l2.500-1v9" stroke="#cf625b" strokeWidth="2.400" fill="none" />
            </svg>
            <span>人气榜</span>
            <svg width="16" height="27" viewBox="0 0 16 27" fill="none" stroke="#aaa" strokeWidth="2.800">
              <path d="M2 1.500L13 13.500L2 25.500" />
            </svg>
          </CardHead>
        </Card>
        <Card>
          <svg width="300" height="100" viewBox="0 0 300 100">
            <path d="M24 0H300V100H30z" fill="#faefec" opacity=".75" />
            <path d="M76 23H142L146 44L160 23H250Q290 24 300 50V100H210Q212 75 236 68L220 46Q190 60 180 100H138L132 46H102V100H82z" fill="#fcf4f1" />
          </svg>
          <CardHead>
            <svg width="52" height="52" viewBox="0 0 52 52">
              <circle cx="26" cy="26" r="26" fill="url(#badge)" />
              <text x="8" y="37" fontSize="30" fontWeight="900" fontStyle="italic" fill="#fff" textLength="35" lengthAdjust="spacingAndGlyphs">VS</text>
            </svg>
            <span>多空看盘</span>
          </CardHead>
        </Card>
      </Cards>

      <BottomBar>
        <IndexBox>
          <i />
          <IndexValue>22747.32</IndexValue>
          <IndexLine>通信设备<Txt $size={41} $ls={0.4} $color={GREEN}><Num>-1.17%</Num></Txt></IndexLine>
        </IndexBox>
        {ACTIONS.map(([name, icon]) => (
          <Action key={name}>
            <svg width="64" height="64" viewBox="0 0 64 64" fill="none" stroke="#666" strokeWidth="3.600">{icon}</svg>
            <span>{name}</span>
          </Action>
        ))}
      </BottomBar>
      <HomeZone><i /></HomeZone>
    </Page>
  );
}

export default App;
